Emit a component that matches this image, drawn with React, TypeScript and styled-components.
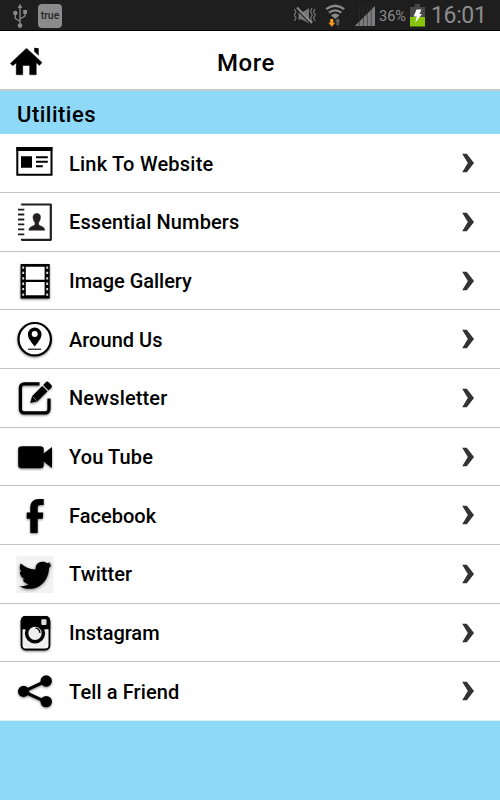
import React from "react";
import styled, { createGlobalStyle } from "styled-components";

const Global = createGlobalStyle`
  * { box-sizing: border-box; }
  body { margin: 0; background: #8ed8f8; font-family: Roboto, "Noto Sans", sans-serif; }
`;

const Screen = styled.div`
  width: 500px;
  height: 800px;
  display: flex;
  flex-direction: column;
  overflow: hidden;
  background: #8ed8f8;
  color: #000;
`;

const StatusBar = styled.div`
  height: 31px;
  flex: none;
  display: flex;
  align-items: center;
  justify-content: space-between;
  background: #1e1e1e;
  border-bottom: 1px solid #000;
  padding: 0 14px 0 11px;
`;

const StatusGroup = styled.div`
  display: flex;
  align-items: center;
`;

const Carrier = styled.span`
  width: 24px;
  height: 24px;
  margin: 1px 0 0 9px;
  border-radius: 4px;
  background: #8b8b8b;
  color: #262626;
  font-size: 10.5px;
  font-weight: 500;
  line-height: 24px;
  text-align: center;
`;

const Percent = styled.span`
  width: 28px;
  margin: 2px 3px 0 3px;
  color: #8c8c8c;
  font-size: 14.5px;
  white-space: nowrap;
`;

const Clock = styled.span`
  width: 55px;
  margin: 2px 0 0 6px;
  color: #8c8c8c;
  font-size: 23px;
  line-height: 28px;
  font-weight: 400;
  letter-spacing: -0.35px;
`;

const Header = styled.header`
  height: 60px;
  flex: none;
  display: grid;
  grid-template-columns: 60px 1fr 68px;
  align-items: center;
  background: #fff;
  border-bottom: 2px solid #c8c8c8;
`;

const HomeButton = styled.button`
  width: 52px;
  height: 48px;
  padding: 0;
  border: 0;
  background: none;
  display: flex;
`;

const Title = styled.h1`
  margin: 6px 0 0;
  font-size: 24px;
  line-height: 30px;
  font-weight: 500;
  letter-spacing: 0.6px;
  text-align: center;
`;

const SectionTitle = styled.h2`
  height: 43px;
  flex: none;
  margin: 0;
  padding: 3px 17px 0;
  font-size: 22px;
  line-height: 42px;
  font-weight: 500;
  letter-spacing: 0.5px;
`;

const List = styled.ul`
  height: 587px;
  margin: 0;
  padding: 0.5px 0 0;
  list-style: none;
  display: grid;
  grid-template-rows: repeat(10, 1fr);
  background: #fff;
`;

const Row = styled.li`
  min-height: 0;
  display: grid;
  grid-template-columns: 54px 1fr 14px;
  align-items: center;
  padding: 0 25px 0 15px;
  border-bottom: 1px solid #c4c4c4;
  &:last-child { border-bottom-color: #e4eef2; }
`;

const Icon = styled.svg<{ $shadow?: boolean }>`
  width: 40px;
  height: 40px;
  display: block;
  overflow: visible;
  filter: ${(p) => (p.$shadow ? "drop-shadow(0 1.5px 1.2px rgba(0,0,0,.5))" : "none")};
`;

const Label = styled.span<{ $tracking: number }>`
  font-size: 20px;
  line-height: 26px;
  font-weight: 500;
  letter-spacing: ${(p) => p.$tracking}px;
  white-space: nowrap;
  padding-top: 1px;
`;

const Chevron = () => (
  <svg width="14" height="20" viewBox="0 0 14 20">
    <path d="M1.2 .8H5.8L13 10 5.8 19.2H1.2L6.8 10Z" fill="#333" />
  </svg>
);

const Website = () => (
  <>
    <path d="M2.3 5H36.5V31.8H2.3Z" fill="#fff" stroke="#000" strokeWidth="2" />
    <path d="M1.4 4H37.4V8H1.4ZM6 13.2H17V24.7H6Z" />
    <path d="M21 14.2H32.8M21 18.7H32.8M21 23.2H27.8" stroke="#000" strokeWidth="1.9" />
  </>
);

const Contacts = () => (
  <>
    <path d="M7 3.2V2.5H35.8V37.8H7V36.8" fill="none" stroke="#231f20" strokeWidth="2.2" strokeLinejoin="round" />
    <path d="M3 7.6H9.3M3 12.5H9.3M3 17.5H9.3M3 22.4H9.3M3 27.4H9.3M3 32.4H9.3" stroke="#231f20" strokeWidth="1.8" />
    <path d="M21.8 11.4C24.4 11.4 25.9 13.3 25.5 15.8 25.2 18.2 24.3 19.6 23.6 20.7V22.5C24.2 24 29.6 24.3 29.8 28.2H13.8C14 24.3 19.4 24 20 22.5V20.7C19.2 19.6 18.3 18.2 18 15.8 17.7 13.3 19.2 11.4 21.8 11.4Z" fill="#231f20" stroke="#231f20" strokeWidth=".5" />
  </>
);

const Film = () => (
  <>
    <path d="M5.6 3H34.7V37.5H5.6Z" />
    <path d="M10.8 5.8H29.6V18.7H10.8ZM10.8 21H29.6V34.3H10.8Z" fill="#fff" />
    <path d="M8.2 5.4V37M32.2 5.4V37" stroke="#ddd" strokeWidth="1.9" strokeDasharray="2.3 3.1" />
  </>
);

const Around = () => (
  <>
    <circle cx="19.7" cy="20.2" r="16.2" fill="#fff" stroke="#000" strokeWidth="2.2" />
    <path fillRule="evenodd" d="M19.7 8.5A6.8 6.8 0 0 1 26.5 15.3C26.5 19.2 23.5 23 19.7 27.4 15.9 23 12.9 19.2 12.9 15.3A6.8 6.8 0 0 1 19.7 8.5ZM19.7 12.1A3 3 0 1 0 19.7 18.1 3 3 0 1 0 19.7 12.1Z" />
    <path d="M13 30.2H26.2" stroke="#000" strokeWidth="1.1" />
  </>
);

const Newsletter = () => (
  <>
    <path d="M24.5 5.8H9A3.6 3.6 0 0 0 5.4 9.4V31.2A3.6 3.6 0 0 0 9 34.8H30.4A3.6 3.6 0 0 0 34 31.2V20.5" fill="none" stroke="#000" strokeWidth="3.2" />
    <path d="M15.2 25 17.2 17.9 27.2 7.9 32.5 13.2 22.5 23.2ZM28.2 6.9 30.8 4.3Q32.2 2.9 33.6 4.3L36.3 7Q37.7 8.4 36.3 9.8L33.6 12.3Z" />
    <path d="M17.7 18.7 21.8 22.8" stroke="#aaa" strokeWidth=".7" />
  </>
);

const Video = () => (
  <>
    <rect x="3.2" y="9.3" width="25.5" height="22" rx="3.3" />
    <path d="M28 17 37 10V31L28 24Z" />
  </>
);

const Facebook = () => (
  <path d="M15.3 38V23.7H11.7V17.5H15.3V13C15.3 6.9 18.5 4.1 24 4.1H28.7V10.1H25.5C23.3 10.1 22.7 11 22.7 13V17.5H28.3L27.7 23.7H22.7V38Z" />
);

const TwitterBacking = styled.rect`
  fill: #f2f2f2;
`;

const BirdGroup = styled.g`
  filter: drop-shadow(0 1.5px 1.8px rgba(0, 0, 0, 0.5));
`;

const Twitter = () => (
  <>
    <TwitterBacking x="1.3" y="2" width="37.2" height="37" />
    <BirdGroup>
      <path d="M36.6 9.5 34.2 10.2 35.2 8.2 32 9.2C28.8 6.6 22.6 7.4 21 11.8L20.4 15.5C14.5 15.3 9.6 12.8 5.7 9.4 4.2 12.3 4.4 15.4 6.7 18.3L4.7 17.8C4.8 21 6.8 23.8 10 25.3L7.8 25.5C8.6 28 10.8 29.6 13.6 30.2 10.8 31.8 7.6 32.4 4.2 32.2 9.5 35.2 16.6 35.6 22.3 33.2 29.9 29.8 34 21.8 34 14L36.7 11.1 34.3 11.5Z" />
    </BirdGroup>
  </>
);

const Instagram = () => (
  <>
    <rect x="6.6" y="3.9" width="27.8" height="32.6" rx="4.2" fill="#fff" stroke="#000" strokeWidth="1.8" />
    <path d="M5.8 16.4V8Q5.8 3 10.8 3H30.2Q35.2 3 35.2 8V16.4H30V26H10V16.4Z" />
    <path d="M8 16.4H33V29.5Q33 34.8 28 34.8H13Q8 34.8 8 29.5Z" fill="#eee" />
    <circle cx="20" cy="20.3" r="8.4" fill="#eee" stroke="#000" strokeWidth="3.5" />
    <path d="M20.5 15.2Q24.5 15.4 25 20" stroke="#000" strokeWidth="1.3" fill="none" />
    <rect x="26.3" y="6.3" width="5.2" height="5.6" rx=".8" fill="#ddd" />
  </>
);

const Share = () => (
  <>
    <path d="M31 10 8.5 20.4 31 30.8" fill="none" stroke="#000" strokeWidth="3.1" />
    <circle cx="8.6" cy="20.4" r="5.6" />
    <circle cx="31.2" cy="10" r="5.7" />
    <circle cx="31.2" cy="30.6" r="5.7" />
  </>
);

const items = [
  { label: "Link To Website", Art: Website, shadow: false, tracking: 0.22 },
  { label: "Essential Numbers", Art: Contacts, shadow: false, tracking: 0.12 },
  { label: "Image Gallery", Art: Film, shadow: true, tracking: -0.03 },
  { label: "Around Us", Art: Around, shadow: true, tracking: 0.02 },
  { label: "Newsletter", Art: Newsletter, shadow: true, tracking: 0.15 },
  { label: "You Tube", Art: Video, shadow: true, tracking: 0.13 },
  { label: "Facebook", Art: Facebook, shadow: true, tracking: 0.02 },
  { label: "Twitter", Art: Twitter, shadow: false, tracking: 0.07 },
  { label: "Instagram", Art: Instagram, shadow: true, tracking: -0.03 },
  { label: "Tell a Friend", Art: Share, shadow: true, tracking: 0.12 },
];

const Usb = () => (
  <svg width="18" height="28" viewBox="0 0 18 28" fill="none" stroke="#8b8b8b" strokeWidth="1.3">
    <path d="M9 25V5M9 20.5L4.3 17.5V12.5M9 18L14 15V11" />
    <path d="M9 2.7 11.3 7H6.7Z" fill="#8b8b8b" stroke="none" />
    <circle cx="9" cy="24.6" r="2.3" fill="#8b8b8b" stroke="none" />
    <circle cx="4.3" cy="12" r="2.2" fill="#8b8b8b" stroke="none" />
    <path d="M12.2 9H16V12.8H12.2Z" fill="#8b8b8b" stroke="none" />
  </svg>
);

/* Mute, wifi, signal strength: drawn as one strip of indicators. */
const Indicators = () => (
  <svg width="84" height="30" viewBox="292 0 84 30">
    <path d="M298.5 12.5H302L309 8V23.5L302 19.5H298.5Z" fill="#757575" />
    <path d="M297 9.5 311.5 24.5" stroke="#1e1e1e" strokeWidth="1.5" />
    <path d="M297 7.5 312 23" stroke="#8b8b8b" strokeWidth="1.9" />
    <path d="M294.3 9 296 12 294.3 15 296 18 294.3 21M312 8 310.5 11.5 312.2 15 310.5 18.5 312.2 22M315 9 313.5 12 315.3 15 313.5 18 315.3 21" fill="none" stroke="#777" strokeWidth="1.2" />
    <g fill="none" stroke="#8b8b8b" strokeWidth="2.3">
      <path d="M326.2 9.2Q335.2 2.3 344.2 9.2" />
      <path d="M329 12.7Q335.2 8 341.4 12.7" />
      <path d="M331.8 16Q335.2 13.5 338.6 16" />
    </g>
    <path d="M332.5 16.5Q335.2 14.8 337.8 16.5L335.2 19Z" fill="#8b8b8b" />
    <path d="M330.2 19H333.3V22.7H335.2L331.8 26.8 328.4 22.7H330.2Z" fill="#f79a23" />
    <path d="M336.5 25.2V21.5H334.9L337.7 18 340.5 21.5H338.9V25.2Z" fill="#5e5e5e" />
    <path d="M354.8 26 375 6V26Z" fill="#7c7c7c" />
    <path d="M359.4 5V26M363.4 5V26M367.4 5V26M371.2 5V26" stroke="#303030" strokeWidth=".6" />
  </svg>
);

const Battery = () => (
  <svg width="15" height="23" viewBox="0 0 15 23">
    <path d="M0 3H4.7V0H10V3H15V13H0Z" fill="#484848" />
    <path d="M0 13H15V22.5H0Z" fill="#86c40a" />
    <path d="M6.5 5.5H11.4L9.5 10H12L5.2 19 6.7 12.5H3.6Z" fill="#fff" />
  </svg>
);

export default function App() {
  return (
    <>
      <Global />
      <Screen>
        <StatusBar>
          <StatusGroup>
            <Usb />
            <Carrier>true</Carrier>
          </StatusGroup>
          <StatusGroup>
            <Indicators />
            <Percent>36%</Percent>
            <Battery />
            <Clock>16:01</Clock>
          </StatusGroup>
        </StatusBar>
        <Header>
          <HomeButton aria-label="Home">
            <svg width="52" height="48" viewBox="0 36.5 52 48">
              <path d="M10.3 64 25.7 49.4Q26.5 48.6 27.3 49.4L42 63 39.5 66 36.3 63.3V75.3H29.6V66H22.8V75.3H16.2V63.4L12.7 66.2Z" stroke="#000" strokeWidth=".4" strokeLinejoin="round" />
              <path d="M34.2 48.2 38.7 48.8V56.2L34.2 52Z" />
            </svg>
          </HomeButton>
          <Title>More</Title>
        </Header>
        <SectionTitle>Utilities</SectionTitle>
        <List>
          {items.map(({ label, Art, shadow, tracking }) => (
            <Row key={label}>
              <Icon viewBox="0 0 40 40" $shadow={shadow}>
                <Art />
              </Icon>
              <Label $tracking={tracking}>{label}</Label>
              <Chevron />
            </Row>
          ))}
        </List>
      </Screen>
    </>
  );
}
